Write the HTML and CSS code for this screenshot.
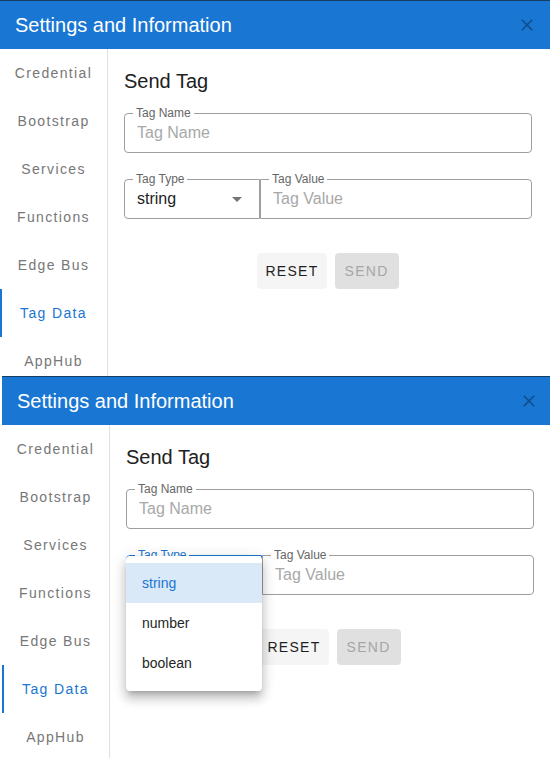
FILE: index.html
```html
<!DOCTYPE html>
<html lang="en">
<head>
<meta charset="utf-8">
<title>Settings and Information</title>
<link rel="stylesheet" href="styles.css">
</head>
<body>
<section class="dialog dialog-first">
  <header class="dialog-header">
    <h1 class="dialog-title">Settings and Information</h1>
    <svg class="close-icon" viewBox="0 0 24 24" width="20" height="20"><path d="M19 6.41 17.59 5 12 10.59 6.41 5 5 6.41 10.59 12 5 17.59 6.41 19 12 13.41 17.59 19 19 17.59 13.41 12z"/></svg>
  </header>
  <div class="dialog-body">
    <nav class="tabs">
      <div class="tab">Credential</div>
      <div class="tab">Bootstrap</div>
      <div class="tab">Services</div>
      <div class="tab">Functions</div>
      <div class="tab">Edge Bus</div>
      <div class="tab tab-selected">Tag Data</div>
      <div class="tab">AppHub</div>
    </nav>
    <main class="content">
      <h2 class="section-title">Send Tag</h2>
      <div class="field field-name">
        <span class="field-label">Tag Name</span>
        <span class="placeholder">Tag Name</span>
      </div>
      <div class="field-row">
        <div class="field field-select">
          <span class="field-label">Tag Type</span>
          <span class="value">string</span>
          <svg class="arrow" viewBox="0 0 10 5" width="10" height="5"><path d="M0 0l5 5 5-5z"/></svg>
        </div>
        <div class="field field-value">
          <span class="field-label">Tag Value</span>
          <span class="placeholder">Tag Value</span>
        </div>
      </div>
      <div class="actions">
        <button class="btn btn-reset">RESET</button>
        <button class="btn btn-send" disabled>SEND</button>
      </div>
    </main>
  </div>
</section>
<section class="dialog dialog-second">
  <header class="dialog-header">
    <h1 class="dialog-title">Settings and Information</h1>
    <svg class="close-icon" viewBox="0 0 24 24" width="20" height="20"><path d="M19 6.41 17.59 5 12 10.59 6.41 5 5 6.41 10.59 12 5 17.59 6.41 19 12 13.41 17.59 19 19 17.59 13.41 12z"/></svg>
  </header>
  <div class="dialog-body">
    <nav class="tabs">
      <div class="tab">Credential</div>
      <div class="tab">Bootstrap</div>
      <div class="tab">Services</div>
      <div class="tab">Functions</div>
      <div class="tab">Edge Bus</div>
      <div class="tab tab-selected">Tag Data</div>
      <div class="tab">AppHub</div>
    </nav>
    <main class="content">
      <h2 class="section-title">Send Tag</h2>
      <div class="field field-name">
        <span class="field-label">Tag Name</span>
        <span class="placeholder">Tag Name</span>
      </div>
      <div class="field-row">
        <div class="field field-select field-focused">
          <span class="field-label">Tag Type</span>
          <span class="value">string</span>
          <svg class="arrow" viewBox="0 0 10 5" width="10" height="5"><path d="M0 0l5 5 5-5z"/></svg>
          <ul class="menu">
            <li class="menu-item menu-item-selected">string</li>
            <li class="menu-item">number</li>
            <li class="menu-item">boolean</li>
          </ul>
        </div>
        <div class="field field-value">
          <span class="field-label">Tag Value</span>
          <span class="placeholder">Tag Value</span>
        </div>
      </div>
      <div class="actions">
        <button class="btn btn-reset">RESET</button>
        <button class="btn btn-send" disabled>SEND</button>
      </div>
    </main>
  </div>
</section>
</body>
</html>
```

FILE: styles.css
```css
html, body {
  margin: 0;
  padding: 0;
  overflow: hidden;
  background: #ffffff;
}

body {
  font-family: "Liberation Sans", Arial, sans-serif;
  color: #212121;
}

.dialog {
  width: 550px;
  display: flex;
  flex-direction: column;
  overflow: hidden;
  background: #ffffff;
  border-top: 1px solid #153c63;
  box-sizing: border-box;
}

.dialog-first {
  height: 376px;
}

.dialog-second {
  height: 382px;
  margin-left: 2px;
}

.dialog-header {
  flex: 0 0 48px;
  height: 48px;
  background: #1976d2;
  display: flex;
  align-items: center;
  justify-content: space-between;
  padding: 0 13px 0 15px;
}

.dialog-title {
  margin: 0;
  font-size: 20px;
  font-weight: 400;
  color: #ffffff;
  line-height: 1;
}

.close-icon {
  fill: rgba(0, 0, 0, 0.33);
  display: block;
}

.dialog-body {
  flex: 1;
  display: flex;
  min-height: 0;
}

.tabs {
  width: 107px;
  flex: 0 0 107px;
  border-right: 1px solid #e0e0e0;
  display: flex;
  flex-direction: column;
}

.tab {
  flex: 0 0 48px;
  height: 48px;
  display: flex;
  align-items: center;
  justify-content: center;
  font-size: 14px;
  letter-spacing: 1.35px;
  color: #777777;
}

.tab-selected {
  color: #1976d2;
  box-shadow: inset 2px 0 0 #1976d2;
}

.content {
  flex: 1;
  padding: 16px 18px 0 16px;
  display: flex;
  flex-direction: column;
}

.section-title {
  margin: 0 0 16px;
  font-size: 20px;
  font-weight: 400;
  line-height: 32px;
  color: #212121;
}

.field {
  position: relative;
  height: 40px;
  box-sizing: border-box;
  border: 1px solid #9e9e9e;
  border-radius: 4px;
  display: flex;
  align-items: center;
  padding: 0 12px;
  font-size: 16px;
}

.field-label {
  position: absolute;
  top: -8px;
  left: 8px;
  padding: 0 3px;
  background: #ffffff;
  font-size: 12px;
  line-height: 14px;
  color: #666666;
  z-index: 1;
}

.placeholder {
  color: #a8a8a8;
}

.value {
  color: #222222;
  flex: 1;
}

.field-name {
  margin-bottom: 26px;
}

.field-row {
  display: flex;
}

.field-select {
  width: 136px;
  flex: 0 0 136px;
  border-radius: 4px 0 0 4px;
  padding-right: 17px;
}

.arrow {
  fill: #757575;
  display: block;
}

.field-value {
  flex: 1;
  border-radius: 0 4px 4px 0;
}

.field-focused {
  border-color: #1976d2;
}

.field-focused .field-label {
  color: #1976d2;
}

.menu {
  position: absolute;
  top: 0;
  left: -1px;
  right: -1px;
  margin: 0;
  padding: 7px 0 8px;
  list-style: none;
  background: #ffffff;
  border-radius: 4px;
  z-index: 2;
  box-shadow: 0 5px 5px -3px rgba(0, 0, 0, 0.2), 0 8px 10px 1px rgba(0, 0, 0, 0.14), 0 3px 14px 2px rgba(0, 0, 0, 0.12);
}

.menu-item {
  height: 40px;
  display: flex;
  align-items: center;
  padding: 0 16px;
  font-size: 14px;
  color: #262626;
}

.menu-item-selected {
  background: #dae9f8;
  color: #1976d2;
}

.actions {
  margin-top: 34px;
  display: flex;
  justify-content: center;
  gap: 8px;
}

.btn {
  height: 36px;
  min-width: 64px;
  padding: 0 8px;
  border: none;
  border-radius: 4px;
  font-family: "Liberation Sans", Arial, sans-serif;
  font-size: 14px;
  letter-spacing: 1.3px;
}

.btn-reset {
  background: #f5f5f5;
  color: #1f1f1f;
}

.btn-send {
  background: #e0e0e0;
  color: #a6a6a6;
}
```
